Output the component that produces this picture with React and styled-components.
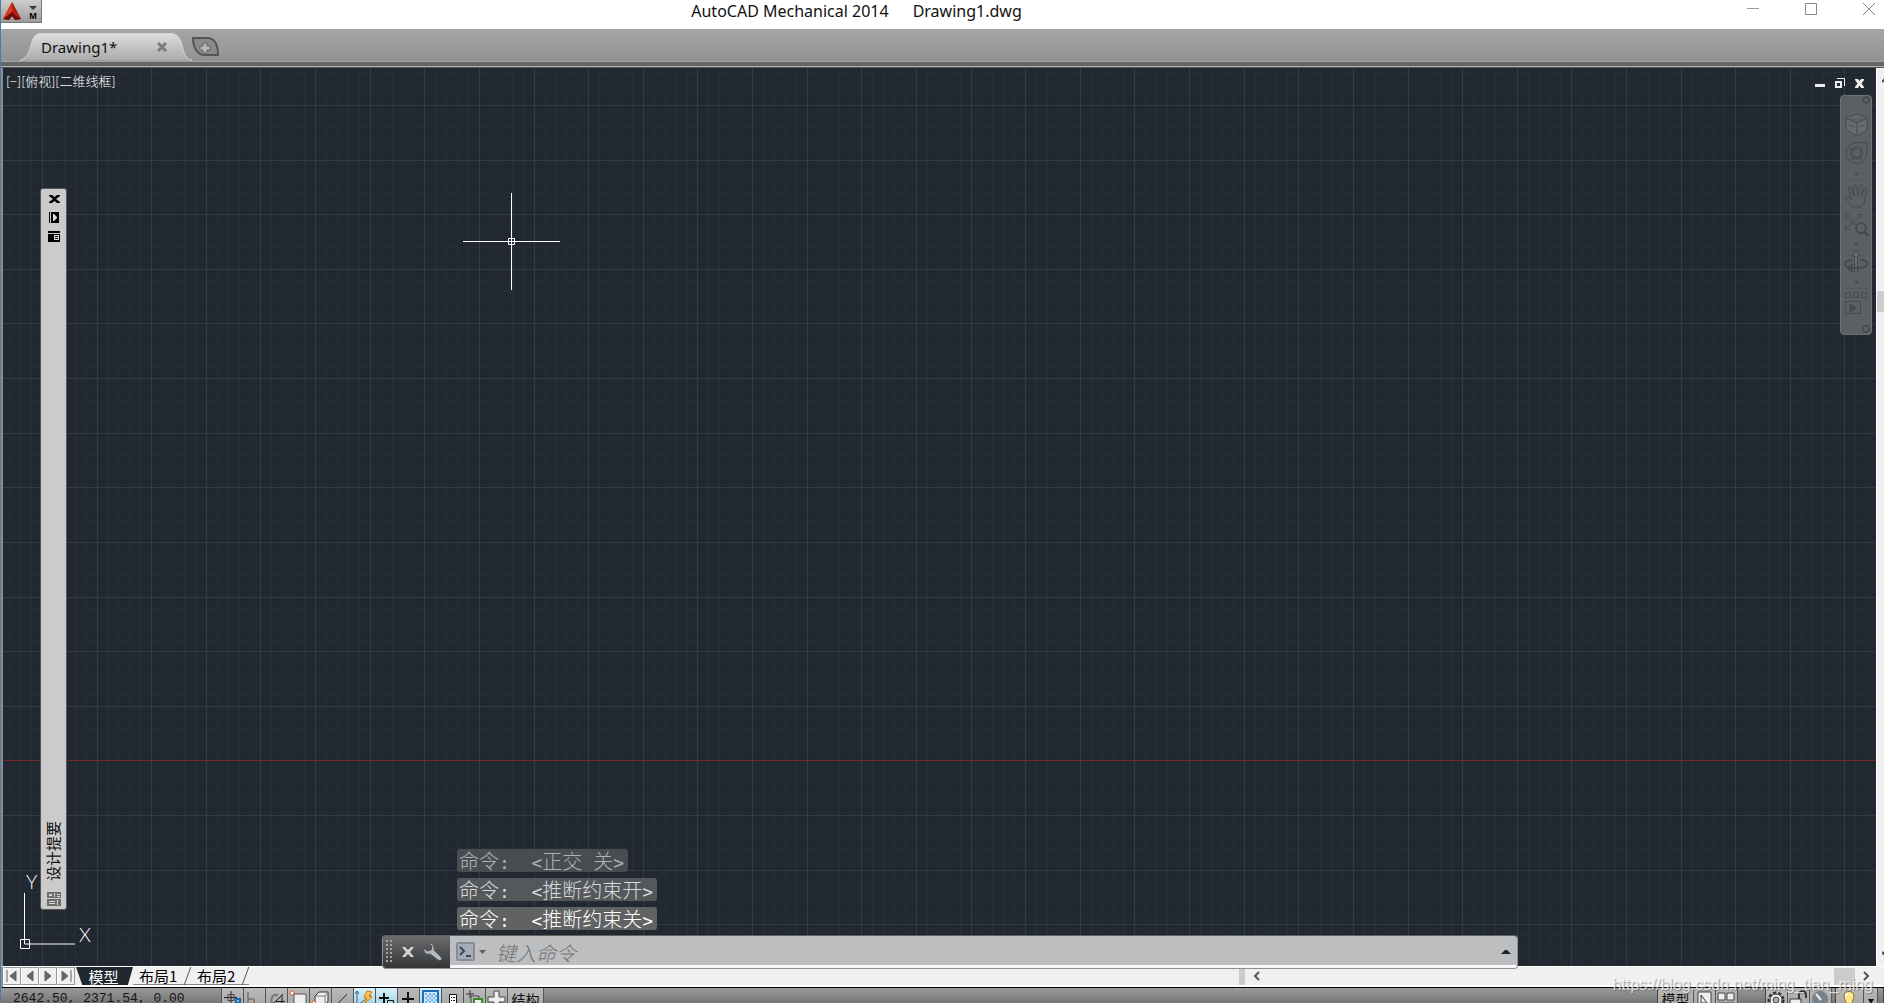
import React from "react";
import styled, { createGlobalStyle } from "styled-components";

const colors = {
  canvas: "#212830",
  minor: "#262e39",
  major: "#333b4b",
  axis: "#73282b",
  panel: "#cbcbcb",
  light: "#f0f0f0",
  icon: "#434a51"
};

const fonts = {
  ui: '"Noto Sans", "Noto Sans CJK SC", sans-serif',
  cjk: '"Noto Sans CJK SC", sans-serif',
  mono: '"DejaVu Sans Mono", "Noto Sans CJK SC", monospace'
};

const GlobalStyle = createGlobalStyle`
  * {
    box-sizing: border-box;
    margin: 0;
    padding: 0;
  }

  body {
    overflow: hidden;
    font-family: ${fonts.ui};
    background: #fff;
  }

  button {
    border: 0;
    background: none;
    color: inherit;
    font: inherit;
    cursor: pointer;
  }

  svg {
    display: block;
    flex: none;
  }
`;

const Window = styled.div`
  display: flex;
  flex-direction: column;
  height: 100vh;
  overflow: hidden;
  border-left: 1px solid #4f79a8;
`;

/* Title bar */

const TitleBar = styled.header`
  display: flex;
  flex: none;
  height: 29px;
  background: #fff;
`;

const AppButton = styled.button`
  display: flex;
  align-items: center;
  justify-content: space-between;
  width: 41px;
  height: 23px;
  padding: 0 2px;
  border-right: 1px solid #777;
  border-bottom: 1px solid #777;
  background: linear-gradient(#cfcfcf, #9c9c9c);
`;

const Title = styled.h1`
  display: flex;
  flex: 1;
  justify-content: center;
  gap: 24px;
  height: 22px;
  color: #111;
  font-size: 16px;
  font-weight: 400;
  line-height: 22px;
`;

const WindowButtons = styled.div`
  display: flex;
  gap: 46px;
  height: 18px;
  padding: 0 9px 0 76px;
  align-items: center;
`;

/* Drawing tabs */

const FileTabs = styled.nav`
  display: flex;
  flex: none;
  height: 39px;
  padding: 4px 0 6px 19px;
  background: linear-gradient(
    #a5a5a5 0,
    #929292 32px,
    #a2a2a2 32px,
    #a2a2a2 33px,
    #656766 33px,
    #656766 37px,
    #b0aeac 37px,
    #b0aeac 38px,
    #54565a 38px
  );
`;

const FileTab = styled.div`
  position: relative;
  display: flex;
  align-items: center;
  width: 172px;
  height: 28px;
  padding: 0 16px 0 21px;
  justify-content: space-between;
  color: #111;
  font-size: 15px;
  line-height: 28px;

  button {
    position: relative;
    padding-right: 9px;
  }
`;

const TabLabel = styled.button`
  height: 28px;
`;

const TabShape = styled.svg`
  position: absolute;
  inset: 0;
`;

const NewTab = styled.button`
  align-self: flex-start;
  padding-top: 4px;
`;

/* Drawing area */

const Workspace = styled.main`
  position: relative;
  display: flex;
  flex: 1;
  min-height: 0;
`;

const Canvas = styled.section`
  position: relative;
  flex: 1;
  overflow: hidden;
  border-left: 2px solid #8d8d8b;
  background: ${colors.canvas};
`;

const Grid = styled.svg`
  position: absolute;
  top: 0;
  left: 0;
  width: 100%;
  height: 100%;
`;

const ViewControls = styled.div`
  position: absolute;
  top: 4px;
  left: 3px;
  display: flex;
  color: #fff;
  font-family: ${fonts.cjk};
  font-size: 13px;
  font-weight: 300;
  line-height: 18px;
`;

const DocButtons = styled.div`
  position: absolute;
  top: 9px;
  right: 11px;
  display: flex;
  gap: 8px;
`;

const Crosshair = styled.svg`
  position: absolute;
  top: 125px;
  left: 460px;
`;

const Ucs = styled.svg`
  position: absolute;
  bottom: 16px;
  left: 17px;

  text {
    fill: #fff;
    font-family: Lato, sans-serif;
    font-size: 19px;
    font-weight: 300;
  }
`;

const Palette = styled.aside`
  position: absolute;
  top: 120px;
  bottom: 56px;
  left: 37px;
  display: flex;
  flex-direction: column;
  align-items: center;
  width: 27px;
  padding: 4px 0 3px;
  gap: 6px;
  border: 1px solid #555;
  border-radius: 3px;
  background: ${colors.panel};
`;

const PaletteTitle = styled.h2`
  margin-top: auto;
  margin-right: 2px;
  margin-bottom: 5px;
  color: #111;
  font-family: ${fonts.cjk};
  font-size: 15px;
  font-weight: 400;
  line-height: 20px;
  writing-mode: vertical-rl;
  text-orientation: sideways;
  transform: rotate(180deg);
`;

const NavBar = styled.div`
  position: absolute;
  top: 27px;
  right: 4px;
  display: flex;
  flex-direction: column;
  align-items: center;
  width: 32px;
  height: 240px;
  border: 1px solid #6d7275;
  border-radius: 4px;
  background: #5b6063;
`;

const VerticalScroll = styled.div`
  display: flex;
  flex-direction: column;
  justify-content: space-between;
  width: 8px;
  padding: 9px 0 9px 5px;
  overflow: hidden;
  border-left: 1px solid #fff;
  background: ${colors.light};
`;

const VerticalThumb = styled.div`
  width: 8px;
  height: 21px;
  margin: 208px 0 auto -5px;
  background: #cdcdcd;
`;

/* Command line */

const CommandDock = styled.div`
  position: absolute;
  right: 366px;
  bottom: -3px;
  left: 381px;
  z-index: 1;
`;

const History = styled.ol`
  display: flex;
  flex-direction: column;
  align-items: flex-start;
  gap: 6px;
  padding: 0 0 5px 75px;
  list-style: none;
`;

const Message = styled.li`
  height: 23px;
  padding: 0 4px 0 2px;
  border-radius: 3px;
  background: ${props => props.$back};
  color: ${props => props.$color};
  font-family: ${fonts.cjk};
  font-size: 20px;
  font-weight: 300;
  line-height: 23px;
  white-space: pre;
`;

const Mono = styled.span`
  font-family: ${fonts.mono};
  font-size: 18px;
`;

const CommandLine = styled.div`
  display: flex;
  height: 34px;
  border: 1px solid #8d8f90;
  border-top-color: #606366;
  border-radius: 4px;
  overflow: hidden;
`;

const CommandTools = styled.div`
  display: flex;
  align-items: center;
  gap: 9px;
  width: 67px;
  padding-left: 3px;
  background: linear-gradient(#6c6c6c, #333537);
`;

const CommandField = styled.label`
  display: flex;
  flex: 1;
  align-items: center;
  padding: 0 6px;
  background: linear-gradient(#bdbec0 0, #bdbec0 29px, #f8f8fa 29px);
`;

const CommandInput = styled.input`
  flex: 1;
  min-width: 0;
  height: 28px;
  margin-left: 10px;
  border: 0;
  outline: 0;
  background: transparent;
  font-family: ${fonts.cjk};
  font-size: 20px;
  font-style: italic;
  font-weight: 300;

  &::placeholder {
    color: #707275;
    opacity: 1;
  }
`;

/* Layout tabs and horizontal scroll bar */

const LayoutBar = styled.nav`
  display: flex;
  flex: none;
  height: 22px;
  padding-right: 14px;
  border-top: 1px solid #fff;
  border-bottom: 1px solid #000;
  border-left: 2px solid #8d8d8b;
  background: linear-gradient(#f0f0f0 18px, #fff 18px);
  font-family: ${fonts.cjk};
  font-size: 15px;
  line-height: 17px;
`;

const StepButton = styled.button`
  display: flex;
  align-items: center;
  justify-content: center;
  width: 18px;
  height: 18px;
  border: 1px solid #999;
  border-left-color: #fff;
  background: ${colors.light};
`;

const ModelTab = styled.button`
  width: 57px;
  height: 18px;
  margin-left: 1px;
  padding-right: 2px;
  clip-path: polygon(0 0, 100% 0, 91% 100%, 11% 100%);
  background: ${colors.canvas};
  color: #fff;
`;

const LayoutTab = styled.button`
  position: relative;
  width: 58px;
  height: 18px;
  padding-left: 6px;
  border-bottom: 1px solid #888;
  text-align: left;

  &::after {
    content: "";
    position: absolute;
    top: 0;
    right: 3px;
    height: 18px;
    border-right: 1px solid #555;
    transform: skewX(-20deg);
  }
`;

const ScrollTrack = styled.div`
  display: flex;
  align-items: center;
  width: calc(34% - 4px);
  height: 18px;
  margin-left: auto;
`;

const ScrollBlock = styled.div`
  width: ${props => props.$width}px;
  height: 17px;
  background: #cbcbcb;
`;

const ScrollGap = styled.div`
  flex: 1;
`;

/* Status bar */

const StatusBar = styled.footer`
  display: flex;
  flex: none;
  height: 15px;
  overflow: hidden;
  background: linear-gradient(#9a9a9a, #757575);
`;

const Coordinates = styled.output`
  width: 221px;
  padding-left: 12px;
  border-right: 1px solid #555;
  color: #151515;
  font-family: "Liberation Mono", monospace;
  font-size: 13px;
  line-height: 22px;
`;

const StatusButton = styled.button`
  display: flex;
  justify-content: center;
  width: ${props => props.$width || 22}px;
  height: 24px;
  padding-top: 2px;
  border-right: 1px solid #555;
  background: ${props => (props.$on ? "linear-gradient(#d8f1fa, #8fc6dd)" : "linear-gradient(#bababa, #a0a0a0)")};
  color: #111;
  font-family: ${fonts.cjk};
  font-size: 14px;
  line-height: 18px;
`;

const StatusSpace = styled.div`
  flex: ${props => (props.$width ? "none" : 1)};
  width: ${props => props.$width || 0}px;
  border-right: 1px solid #444;
`;

const Watermark = styled.p`
  position: absolute;
  right: 11px;
  bottom: 9px;
  z-index: 2;
  color: rgba(255, 255, 255, 0.7);
  font-family: "Liberation Sans", sans-serif;
  font-size: 16px;
  line-height: 18px;
  text-shadow: 1px 1px 1px rgba(90, 90, 90, 0.6);
  pointer-events: none;
`;

const step = 54.62;

function gridLines(count, start, divisions) {
  const lines = [];
  for (let i = -divisions; i < count * divisions; i++) {
    if (divisions > 1 && i % divisions === 0) continue;
    lines.push(Math.round(start + (i * step) / divisions));
  }
  return lines;
}

function DrawingGrid() {
  const layer = (divisions, color) => (
    <g fill={color}>
      {gridLines(70, 39, divisions).map(x => (
        <rect key={`x${x}`} x={x} width="1" height="100%" />
      ))}
      {gridLines(40, 37, divisions).map(y => (
        <rect key={`y${y}`} y={y} width="100%" height="1" />
      ))}
    </g>
  );

  return (
    <Grid aria-hidden="true">
      {layer(5, colors.minor)}
      {layer(1, colors.major)}
      <rect y="692" width="100%" height="1" fill={colors.axis} />
    </Grid>
  );
}

const NavIcons = () => (
  <svg width="30" height="238" viewBox="0 0 30 238" fill="none" stroke={colors.icon} strokeWidth="1">
    <circle cx="25" cy="4" r="3.5" fill="#4a5054" />
    <path d="M23.5 2.5l3 3m0-3l-3 3" stroke="#6b7073" />
    <path d="M5 22l11-4 10 4v12l-10 6-11-6zM5 22l11 5 10-5M16 27v13" fill="#656b70" />
    <path d="M8 29l5 2m6 0l4-2" />
    <path d="M5 57a10.5 10.5 0 0 1 10.5-10.5H26V57A10.5 10.5 0 0 1 5 57z" />
    <circle cx="15.5" cy="57" r="6" />
    <circle cx="15.5" cy="57" r="4.5" />
    <path d="M9 52l3 2m7 0l3-2M10 64l2-3m7 0l2 3" />
    <path d="M13 77h5l-2.5 3zM13 147h5l-2.5 3zM13 185h5l-2.5 3z" fill={colors.icon} stroke="none" />
    <path d="M5 84.5h22M5 154.5h22M5 192.5h22" stroke="#55595d" />
    <path d="M11 111L5 103q-2-3 1-3l5 4-4-11q0-3 2-2l4 9-1-10q1-3 3 0l2 9 1-9q2-2 3 0v10l2-7q3-2 3 1l-3 13-3 4z" />
    <path d="M6 120l12 12m0-12L6 132M4.5 123v-4.500h4.500m7 0h4.500v4.500M4.500 129v4.500h4.500" />
    <circle cx="20" cy="132" r="5" strokeWidth="2" fill="#5b6063" />
    <path d="M23.5 136l4 4" strokeWidth="3" />
    <path d="M13.5 176v-16h-3l4.500-6 4.500 6h-3v16z" fill="#656b70" />
    <path d="M19 164c11 0 10 8-3 8H7m4-8c-9 1-9 5-3 8" strokeWidth="2" />
    <path d="M11 168l-5 4 5 4z" fill={colors.icon} />
    <path d="M4.5 196.5h5v5h-5zM12.5 196.5h5v5h-5zM20.5 196.5h5v5h-5z" strokeWidth="1" />
    <path d="M4.5 205.5h15v12h-15z" />
    <path d="M9 208l6 4-6 4z" fill={colors.icon} />
    <circle cx="25" cy="233" r="3.5" fill="#4a5054" />
    <path d="M23 232h4m-4 2h4" stroke="#6b7073" />
  </svg>
);

const tools = [
  { name: "捕捉", art: <><path d="M8 1v15M1 7.5h13" stroke="#222" /><path d="M5 4.5h6v6H5z" stroke="#444" /><path d="M13 9h4v4h-4z" stroke="#1769b5" strokeWidth="2" /></> },
  { name: "栅格", art: <path d="M3 2v14M3 9h6v7" stroke="#555" /> },
  { name: "极轴", art: <><path d="M11 5a5 5 0 1 0 1 9" stroke="#777" strokeWidth="2" /><path d="M5 15L16 4M15 5v11M8 11.5h10" stroke="#222" /></> },
  { name: "对象捕捉", art: <><path d="M5 4h12v14H5z" fill="#eee" stroke="#555" /><circle cx="3" cy="3" r="2" fill="#fff" stroke="#e85f2b" /></> },
  { name: "三维捕捉", art: <><path d="M4 6l4-4h9v9l-3 5H4z" fill="#eee" stroke="#333" /><path d="M4 6h10l3-4M14 6v10" stroke="#777" /><circle cx="3" cy="13" r="2" fill="#fff" stroke="#e85f2b" /></> },
  { name: "追踪", art: <path d="M14 4L5 13.5h10" stroke="#222" /> },
  { name: "动态坐标", on: true, art: <><path d="M2 1v15M0 4l2-3 2 3M3 15L16 5" stroke="#356780" /><path d="M12 1l5 1-3 4 3 1-8 7 3-6-3-1z" fill="#ffc34a" stroke="#d47a12" /></> },
  { name: "动态输入", on: true, art: <><path d="M2 8h10M7 3v10" stroke="#111" strokeWidth="2" /><path d="M10.500 10.500h6v4h-6z" stroke="#111" /></> },
  { name: "线宽", art: <path d="M3 9h12M9 2v13" stroke="#111" strokeWidth="2" /> },
  { name: "透明度", on: true, art: <><path d="M2 1h15v16H2z" fill="#cce8fa" stroke="#1b70bd" strokeWidth="2" /><path d="M4 3h2v2H4zm4 0h2v2H8zm4 0h2v2h-2zM6 5h2v2H6zm4 0h2v2h-2zm4 0h2v2h-2zM4 7h2v2H4zm4 0h2v2H8zm4 0h2v2h-2zM6 9h2v2H6zm4 0h2v2h-2zm4 0h2v2h-2zM4 11h2v2H4zm4 0h2v2H8zm4 0h2v2h-2z" fill="#79b5e2" /></> },
  { name: "快捷特性", art: <><path d="M6.5 4.5h7v12h-7z" fill="#fff" stroke="#111" /><path d="M8 7.500h1m1 0h2M8 10.500h1m1 0h2M8 13.500h1m1 0h2" stroke="#111" /></> },
  { name: "选择循环", art: <><path d="M1 4h8M5 0v8" stroke="#333" /><path d="M6 6h8v8H6z" fill="#bbb" stroke="#444" /><path d="M9 9h8v8H9z" fill="#eee" stroke="#39892b" strokeWidth="2" /></> },
  { name: "注释监视器", art: <path d="M7 1h5v6h6v5h-6v6H7v-6H1V7h6z" fill="#eee" stroke="#444" /> }
];

const StatusIcon = ({ children }) => (
  <svg width="19" height="19" viewBox="0 0 19 19" fill="none">{children}</svg>
);

const steps = [
  ["第一个布局", "M3 1v12M12 2v10L6 7z"],
  ["上一个布局", "M11 2v10L5 7z"],
  ["下一个布局", "M5 2v10l6-5z"],
  ["最后一个布局", "M4 2v10l6-5zM13 1v12"]
];

const messages = [
  { text: "正交 关", back: "#4a4d50", color: "#b0b2b4" },
  { text: "推断约束开", back: "#55585a", color: "#d8d9da" },
  { text: "推断约束关", back: "#606263", color: "#ffffff" }
];

function Commands() {
  return (
    <CommandDock>
      <History>
        {messages.map(message => (
          <Message key={message.text} $back={message.back} $color={message.color}>
            命令<Mono>:  &lt;</Mono>
            {message.text.split(" ").map((part, i) => (
              <React.Fragment key={part}>
                {i > 0 && <Mono> </Mono>}
                {part}
              </React.Fragment>
            ))}
            <Mono>&gt;</Mono>
          </Message>
        ))}
      </History>
      <CommandLine>
        <CommandTools>
          <svg width="7" height="24" viewBox="0 0 7 24" fill="#a2a4a6">
            {[0, 4, 8, 12, 16, 20].map(y => (
              <path key={y} d={`M0 ${y}h2v2H0zM4 ${y}h2v2H4z`} />
            ))}
          </svg>
          <button aria-label="关闭命令行">
            <svg width="12" height="12" viewBox="0 0 12 12" fill="#d4d5d6">
              <path d="M0 1h3l3 3 3-3h3L8 6l4 5H9L6 8l-3 3H0l4-5z" />
            </svg>
          </button>
          <button aria-label="自定义">
            <svg width="20" height="20" viewBox="0 0 20 20" fill="#b5bac2" stroke="#4b5058">
              <path d="M5 1l4 3-1 4-4 1-3-3c-1 5 3 7 6 6l8 6c3 2 5-1 3-3l-7-7c1-4-2-8-6-7z" />
            </svg>
          </button>
        </CommandTools>
        <CommandField>
          <svg width="30" height="20" viewBox="0 0 30 20" fill="none">
            <rect x="1" y="1" width="17" height="17" rx="1" fill="#a4acb7" stroke="#858d98" strokeWidth="2" />
            <path d="M4 5l4 4-4 4M10 14h5" stroke="#3d4653" strokeWidth="2" />
            <path d="M23 8h7l-3.500 4z" fill="#5f6164" />
          </svg>
          <CommandInput aria-label="命令" placeholder="键入命令" />
          <svg width="10" height="6" viewBox="0 0 10 6" fill="#222">
            <path d="M0 5l4-4h2l4 4z" />
          </svg>
        </CommandField>
      </CommandLine>
    </CommandDock>
  );
}

function DesignPalette() {
  return (
    <Palette>
      <button aria-label="关闭">
        <svg width="12" height="12" viewBox="0 0 12 12" fill="#000">
          <path d="M1 2h3l2.500 2L9 2h3v1L8 6l4 3v1H9L6.500 8 4 10H1V9l4-3-4-3z" />
        </svg>
      </button>
      <button aria-label="自动隐藏">
        <svg width="12" height="13" viewBox="0 0 12 13">
          <path d="M1 1h1v11H1zM3 1h8v11H3z" fill="#000" />
          <path d="M5 3v7h1l3-3V6L6 3z" fill="#ddd" />
        </svg>
      </button>
      <button aria-label="特性">
        <svg width="12" height="13" viewBox="0 0 12 13">
          <path d="M0 1h12v2H0zM0 4h12v8H0z" fill="#000" />
          <path d="M6 5h5v5H6z" fill="#ddd" />
          <path d="M7 6h3v1H7zM7 8h3v1H7z" fill="#000" />
        </svg>
      </button>
      <PaletteTitle>设计提要</PaletteTitle>
      <svg width="14" height="14" viewBox="0 0 14 14">
        <path d="M0 0h14v6H0zM0 7h14v7H0z" fill="#6e6e6e" />
        <path d="M2 2h3v2H2zM7 1h1v4H7zM10 2h3v1h-3zM10 4h3v1h-3zM2 9h6v1H2zM2 11h6v1H2zM10 8h1v5h-1z" fill="#d6d6d6" />
      </svg>
    </Palette>
  );
}

export default function App() {
  return (
    <>
      <GlobalStyle />
      <Window>
        <TitleBar>
          <AppButton aria-label="应用程序菜单">
            <svg width="18" height="20" viewBox="0 0 18 20">
              <path d="M9 1l9 17-6 1-3-4-3 4-6-1z" fill="#a81a10" />
              <path d="M9 1v10l-5 4-4 3z" fill="#dd3b20" />
              <path d="M9 1l9 17-5-3-4-4z" fill="#b3200f" />
              <path d="M4 15l5-4 4 4 5 3-6 1-3-4-3 4-6-1z" fill="#6d0e0a" />
            </svg>
            <svg width="12" height="18" viewBox="0 0 12 18">
              <path d="M2 4h8L6 8z" fill="#333d49" />
              <text x="6" y="17" textAnchor="middle" fontFamily="Liberation Sans" fontSize="9" fontWeight="700">M</text>
            </svg>
          </AppButton>
          <Title>
            <span>AutoCAD Mechanical 2014</span>
            <span>Drawing1.dwg</span>
          </Title>
          <WindowButtons>
            <button aria-label="最小化">
              <svg width="12" height="12" stroke="#999"><path d="M0 5.500h12" /></svg>
            </button>
            <button aria-label="最大化">
              <svg width="12" height="12" stroke="#888" fill="none"><path d="M.5.5h11v11H.5z" /></svg>
            </button>
            <button aria-label="关闭">
              <svg width="12" height="12" stroke="#888"><path d="M0 0l12 12M12 0L0 12" /></svg>
            </button>
          </WindowButtons>
        </TitleBar>

        <FileTabs>
          <FileTab>
            <TabShape width="172" height="28" viewBox="0 0 172 28" aria-hidden="true">
              <defs>
                <linearGradient id="tab" x1="0" y1="0" x2="0" y2="1">
                  <stop offset="0" stopColor="#dedede" />
                  <stop offset="1" stopColor="#aaaaaa" />
                </linearGradient>
              </defs>
              <path d="M0 27.5C6 26 9 21 11 12C13 4 15 .5 21 .5H150C157 .5 160 4 162 12C164 21 166 26 172 27.5" fill="url(#tab)" stroke="#d5d5d5" />
            </TabShape>
            <TabLabel>Drawing1*</TabLabel>
            <button aria-label="关闭图形">
              <svg width="10" height="10" stroke="#7c7c7c" strokeWidth="3"><path d="M1 1l8 8M9 1L1 9" /></svg>
            </button>
          </FileTab>
          <NewTab aria-label="新建图形">
            <svg width="27" height="20" viewBox="0 0 27 20" fill="#8a8a8a">
              <path d="M1 1h14c7 0 11 6 11 17H12C6 18 1 11 1 1z" stroke="#555" strokeWidth="2" />
              <path d="M11 6h4v3h3v4h-3v3h-4v-3H8V9h3z" fill="#b7b7b7" stroke="#666" />
            </svg>
          </NewTab>
        </FileTabs>

        <Workspace>
          <Canvas aria-label="绘图区">
            <DrawingGrid />
            <ViewControls>
              <button>[−]</button>
              <button>[俯视]</button>
              <button>[二维线框]</button>
            </ViewControls>
            <Crosshair width="97" height="97" viewBox="0 0 97 97" fill="none" stroke="#fff">
              <path d="M0 48.5h97M48.5 0v97M45.5 45.5h6v6h-6z" />
            </Crosshair>
            <Ucs width="80" height="80" viewBox="0 0 80 80" fill="none" stroke="#fff">
              <path d="M4.5 23v51H55M.5 69.5h9v9h-9z" />
              <text x="6" y="19" stroke="none">Y</text>
              <text x="59" y="72" stroke="none">X</text>
            </Ucs>
            <DesignPalette />
            <DocButtons>
              <button aria-label="最小化图形">
                <svg width="12" height="13" viewBox="0 0 12 13"><path d="M1 7h10v3H1z" fill="#eee" /></svg>
              </button>
              <button aria-label="还原图形">
                <svg width="12" height="13" viewBox="0 0 12 13" fill="none" stroke="#eee">
                  <path d="M3 1.500h7.500V9" /><path d="M2 5h5v5H2z" strokeWidth="2" />
                </svg>
              </button>
              <button aria-label="关闭图形窗口">
                <svg width="11" height="13" viewBox="0 0 11 13" fill="#eee">
                  <path d="M1 2h3l1.500 2L7 2h3v1L7.500 6.500 10 10v1H7L5.500 8.500 4 11H1v-1l2.500-3.500L1 3z" />
                </svg>
              </button>
            </DocButtons>
            <NavBar role="toolbar" aria-label="导航栏">
              <NavIcons />
            </NavBar>
          </Canvas>
          <VerticalScroll>
            <svg width="8" height="6" fill="none" stroke="#444" strokeWidth="2"><path d="M0 5l4-4 4 4" /></svg>
            <VerticalThumb />
            <svg width="8" height="6" fill="none" stroke="#444" strokeWidth="2"><path d="M0 1l4 4 4-4" /></svg>
          </VerticalScroll>
          <Commands />
        </Workspace>

        <LayoutBar>
          {steps.map(([name, d]) => (
            <StepButton key={name} aria-label={name}>
              <svg width="16" height="14" viewBox="0 0 16 14" fill="#666" stroke="#666"><path d={d} /></svg>
            </StepButton>
          ))}
          <ModelTab>模型</ModelTab>
          <LayoutTab>布局1</LayoutTab>
          <LayoutTab>布局2</LayoutTab>
          <ScrollTrack>
            <ScrollBlock $width={6} />
            <svg width="22" height="10" viewBox="0 0 22 10" fill="none" stroke="#555" strokeWidth="2"><path d="M14 1l-4 4 4 4" /></svg>
            <ScrollGap />
            <ScrollBlock $width={21} />
            <svg width="15" height="10" viewBox="0 0 15 10" fill="none" stroke="#555" strokeWidth="2"><path d="M9 1l4 4-4 4" /></svg>
          </ScrollTrack>
        </LayoutBar>

        <StatusBar>
          <Coordinates>2642.50, 2371.54, 0.00</Coordinates>
          {tools.map(tool => (
            <StatusButton key={tool.name} $on={tool.on} aria-label={tool.name}>
              <StatusIcon>{tool.art}</StatusIcon>
            </StatusButton>
          ))}
          <StatusButton $width={36}>结构</StatusButton>
          <StatusSpace />
          <StatusButton $width={36}>模型</StatusButton>
          <StatusButton aria-label="快速查看布局">
            <StatusIcon><path d="M3 2h13v15H3z" fill="#eee" stroke="#444" /><path d="M6 5v8h6z" fill="#eee" stroke="#333" /></StatusIcon>
          </StatusButton>
          <StatusButton aria-label="快速查看图形">
            <StatusIcon><path d="M1 3h7v7H1zM10 3h7v7h-7zM1 13h16v3H1z" fill="#eee" stroke="#444" /></StatusIcon>
          </StatusButton>
          <StatusSpace $width={28} />
          <StatusButton aria-label="切换工作空间">
            <StatusIcon>
              <circle cx="9" cy="10" r="7" stroke="#333" strokeWidth="3" strokeDasharray="3 2" />
              <circle cx="9" cy="10" r="6" fill="#eee" stroke="#444" />
              <circle cx="9" cy="10" r="3" fill="#aaa" stroke="#444" />
            </StatusIcon>
          </StatusButton>
          <StatusButton aria-label="锁定">
            <StatusIcon><path d="M10 10V5c0-5 7-5 7 0v3" stroke="#333" strokeWidth="2" /><path d="M1 9h11v9H1z" fill="#eee" stroke="#333" /></StatusIcon>
          </StatusButton>
          <StatusButton aria-label="硬件加速">
            <StatusIcon><circle cx="9" cy="9" r="8" fill="#78818b" /><path d="M5 4l5 6" stroke="#eee" strokeWidth="2" /></StatusIcon>
          </StatusButton>
          <StatusSpace $width={4} />
          <StatusButton $width={28} aria-label="隔离对象">
            <StatusIcon><path d="M6 14c0-4-2-4-2-8 0-6 10-6 10 0 0 4-2 4-2 8z" fill="#ffe68a" stroke="#8a6d24" /><path d="M8 4c-1 0-2 1-2 2" stroke="#fff" strokeWidth="2" /></StatusIcon>
          </StatusButton>
          <StatusButton $width={14} aria-label="状态栏菜单">
            <svg width="6" height="16" viewBox="0 0 6 16"><path d="M0 9h6l-3 5z" fill="#111" /></svg>
          </StatusButton>
          <StatusSpace $width={6} />
        </StatusBar>
        <Watermark>https://blog.csdn.net/ming_tian_ming</Watermark>
      </Window>
    </>
  );
}
